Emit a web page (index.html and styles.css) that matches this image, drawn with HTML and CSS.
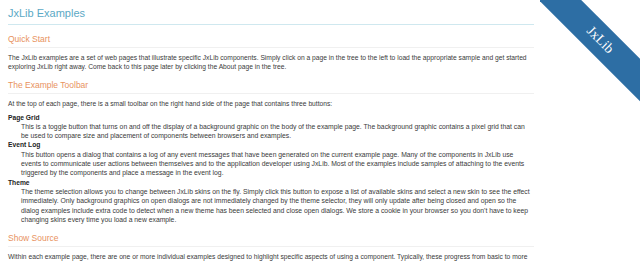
FILE: index.html
```html
<!DOCTYPE html>
<html lang="en">
<head>
    <meta charset="UTF-8">
    <title>JxLib Examples</title>
    <link rel="stylesheet" href="styles.css">
</head>
<body>

    <div class="ribbon-wrap">
        <div class="ribbon">JxLib</div>
    </div>

    <div class="page">
        <h1 class="page-title">JxLib Examples</h1>

        <h2 class="section-title">Quick Start</h2>
        <p>The JxLib examples are a set of web pages that illustrate specific JxLib components. Simply click on a page in the tree to the left to load the appropriate sample and get started exploring JxLib right away. Come back to this page later by clicking the About page in the tree.</p>

        <h2 class="section-title">The Example Toolbar</h2>
        <p>At the top of each page, there is a small toolbar on the right hand side of the page that contains three buttons:</p>
        <dl class="button-list">
            <dt>Page Grid</dt>
            <dd>This is a toggle button that turns on and off the display of a background graphic on the body of the example page. The background graphic contains a pixel grid that can be used to compare size and placement of components between browsers and examples.</dd>
            <dt>Event Log</dt>
            <dd>This button opens a dialog that contains a log of any event messages that have been generated on the current example page. Many of the components in JxLib use events to communicate user actions between themselves and to the application developer using JxLib. Most of the examples include samples of attaching to the events triggered by the components and place a message in the event log.</dd>
            <dt>Theme</dt>
            <dd>The theme selection allows you to change between JxLib skins on the fly. Simply click this button to expose a list of available skins and select a new skin to see the effect immediately. Only background graphics on open dialogs are not immediately changed by the theme selector, they will only update after being closed and open so the dialog examples include extra code to detect when a new theme has been selected and close open dialogs. We store a cookie in your browser so you don't have to keep changing skins every time you load a new example.</dd>
        </dl>

        <h2 class="section-title">Show Source</h2>
        <p>Within each example page, there are one or more individual examples designed to highlight specific aspects of using a component. Typically, these progress from basic to more advanced usage, and each one has a button that shows the source code used to create it.</p>
    </div>

</body>
</html>
```

FILE: styles.css
```css
/* JxLib examples start page */

* {
    box-sizing: border-box;
}

body {
    margin: 0;
    font-family: 'Liberation Sans', Arial, sans-serif;
    font-size: 6.7px;
    line-height: 9.3px;
    color: #3a3a3a;
    background-color: #ffffff;
    overflow: hidden;
}

.page {
    margin: 0 106px 0 8px;
}

/* Main heading */
.page-title {
    margin: 0;
    padding: 7px 0 4px;
    font-size: 11px;
    line-height: 13px;
    font-weight: normal;
    color: #5ba9c5;
    border-bottom: 1px solid #cfe8ef;
}

/* Section headings */
.section-title {
    margin: 9px 0 0;
    padding: 0 0 3px;
    font-size: 8.5px;
    line-height: 10px;
    font-weight: normal;
    color: #e8925e;
    border-bottom: 1px solid #f0f0f0;
}

p {
    margin: 4.5px 0 4.7px;
}

.button-list {
    margin: 0;
}

.button-list dt {
    font-weight: bold;
    color: #222222;
}

.button-list dd {
    margin: 0 0 0 13px;
    font-size: 6.8px;
}

/* Corner ribbon */
.ribbon-wrap {
    position: absolute;
    top: 0;
    right: 0;
    width: 100px;
    height: 110px;
    overflow: hidden;
}

.ribbon {
    position: absolute;
    left: -40px;
    top: 25px;
    width: 200px;
    height: 30px;
    line-height: 30px;
    transform: rotate(45deg);
    background-color: #2d6ea4;
    color: #ffffff;
    text-align: center;
    font-family: 'Liberation Serif', 'Times New Roman', serif;
    font-size: 14px;
}
```
